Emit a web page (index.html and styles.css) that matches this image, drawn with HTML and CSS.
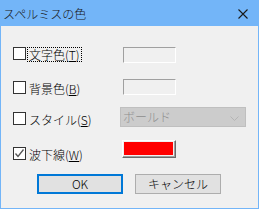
FILE: index.html
```html
<!DOCTYPE html>
<html lang="ja">
<head>
    <meta charset="UTF-8">
    <title>スペルミスの色</title>
    <link rel="stylesheet" href="styles.css">
</head>
<body>
    <div class="dialog">
        <div class="titlebar">
            <span class="title">スペルミスの色</span>
            <svg class="close" width="10" height="10" viewBox="0 0 10 10">
                <path d="M0.5 0.5 L9.5 9.5 M9.5 0.5 L0.5 9.5" stroke="#1a1a1a" stroke-width="1.1" fill="none"/>
            </svg>
        </div>

        <div class="content">
            <div class="row row-1">
                <label class="check">
                    <span class="box"></span>
                    <span class="label focus">文字色(<u>T</u>)</span>
                </label>
                <span class="swatch"></span>
            </div>

            <div class="row row-2">
                <label class="check">
                    <span class="box"></span>
                    <span class="label">背景色(<u>B</u>)</span>
                </label>
                <span class="swatch"></span>
            </div>

            <div class="row row-3">
                <label class="check">
                    <span class="box"></span>
                    <span class="label">スタイル(<u>S</u>)</span>
                </label>
                <div class="combo">
                    <span class="combo-text">ボールド</span>
                    <svg class="chevron" width="9" height="5" viewBox="0 0 9 5">
                        <path d="M0.5 0.5 L4.5 4.5 L8.5 0.5" stroke="#b4b4b4" stroke-width="1" fill="none"/>
                    </svg>
                </div>
            </div>

            <div class="row row-4">
                <label class="check">
                    <span class="box checked">
                        <svg width="11" height="11" viewBox="0 0 11 11">
                            <path d="M1.5 5.5 L4 8.5 L9.5 1.5" stroke="#555" stroke-width="1.3" fill="none"/>
                        </svg>
                    </span>
                    <span class="label">波下線(<u>W</u>)</span>
                </label>
                <span class="color-btn"><span class="color-fill"></span></span>
            </div>

            <div class="buttons">
                <button class="btn default">OK</button>
                <button class="btn">キャンセル</button>
            </div>
        </div>
    </div>
</body>
</html>
```

FILE: styles.css
```css
* {
    margin: 0;
    padding: 0;
    box-sizing: border-box;
}

body {
    font-family: "Noto Sans CJK JP", "Noto Sans", sans-serif;
    font-size: 12px;
    font-weight: 300;
    color: #000;
    background: #f0f0f0;
}

.dialog {
    width: 259px;
    height: 209px;
    border: 1px solid #73b5f8;
    background: #f0f0f0;
    display: flex;
    flex-direction: column;
}

.titlebar {
    height: 25px;
    background: #73b5f8;
    display: flex;
    align-items: center;
    justify-content: space-between;
    padding: 0 10px 0 2px;
    flex-shrink: 0;
}

.title {
    font-size: 12px;
    line-height: 14px;
    color: #1a1a1a;
}

.close {
    display: block;
    margin-top: 1px;
}

.content {
    padding: 20px 0 0 12px;
}

.row {
    display: grid;
    grid-template-columns: 107px auto;
    align-items: start;
}

.row-1 { height: 32px; }
.row-2 { height: 28px; }
.row-3 { height: 34px; }
.row-4 { height: 34px; }

.row-1 .check { margin-top: 1px; }
.row-2 .check { margin-top: 3px; }
.row-3 .check { margin-top: 6px; }
.row-4 .check { margin-top: 7px; }

.check {
    display: flex;
    align-items: flex-start;
    gap: 2px;
}

.box {
    width: 13px;
    height: 13px;
    border: 1px solid #333;
    background: #fff;
    display: flex;
    align-items: center;
    justify-content: center;
}

.label {
    line-height: 13px;
    margin-top: 1px;
    padding: 0 1px;
    white-space: nowrap;
}

.label u {
    text-underline-offset: 1px;
}

.focus {
    outline: 1px dotted #000;
}

.swatch {
    display: block;
    width: 53px;
    height: 16px;
    margin: 1px 0 0 3px;
    border-top: 1px solid #a0a0a0;
    border-left: 1px solid #a0a0a0;
    border-bottom: 1px solid #fff;
    border-right: 1px solid #fff;
    background: #f0f0f0;
}

.combo {
    width: 126px;
    height: 20px;
    margin-top: 1px;
    border: 1px solid #bfbfbf;
    background: #cccccc;
    display: flex;
    align-items: center;
    justify-content: space-between;
    padding: 0 6px 0 2px;
}

.combo-text {
    color: #8e8e8e;
    line-height: 14px;
}

.chevron {
    display: block;
    margin-top: 2px;
}

.color-btn {
    display: block;
    width: 54px;
    height: 18px;
    margin-left: 2px;
    border-top: 1px solid #fff;
    border-left: 1px solid #fff;
    border-bottom: 1px solid #696969;
    border-right: 1px solid #696969;
    box-shadow: inset -1px -1px 0 #a0a0a0;
    padding: 1px 2px 2px 1px;
}

.color-fill {
    display: block;
    width: 100%;
    height: 100%;
    background: #ff0000;
}

.buttons {
    display: flex;
    justify-content: center;
    gap: 12px;
    padding-right: 13px;
}

.btn {
    width: 86px;
    height: 20px;
    font-family: inherit;
    font-size: 12px;
    font-weight: 300;
    line-height: 14px;
    color: #000;
    background: #e1e1e1;
    border: 1px solid #adadad;
}

.btn.default {
    border: 2px solid #0078d7;
}
```
